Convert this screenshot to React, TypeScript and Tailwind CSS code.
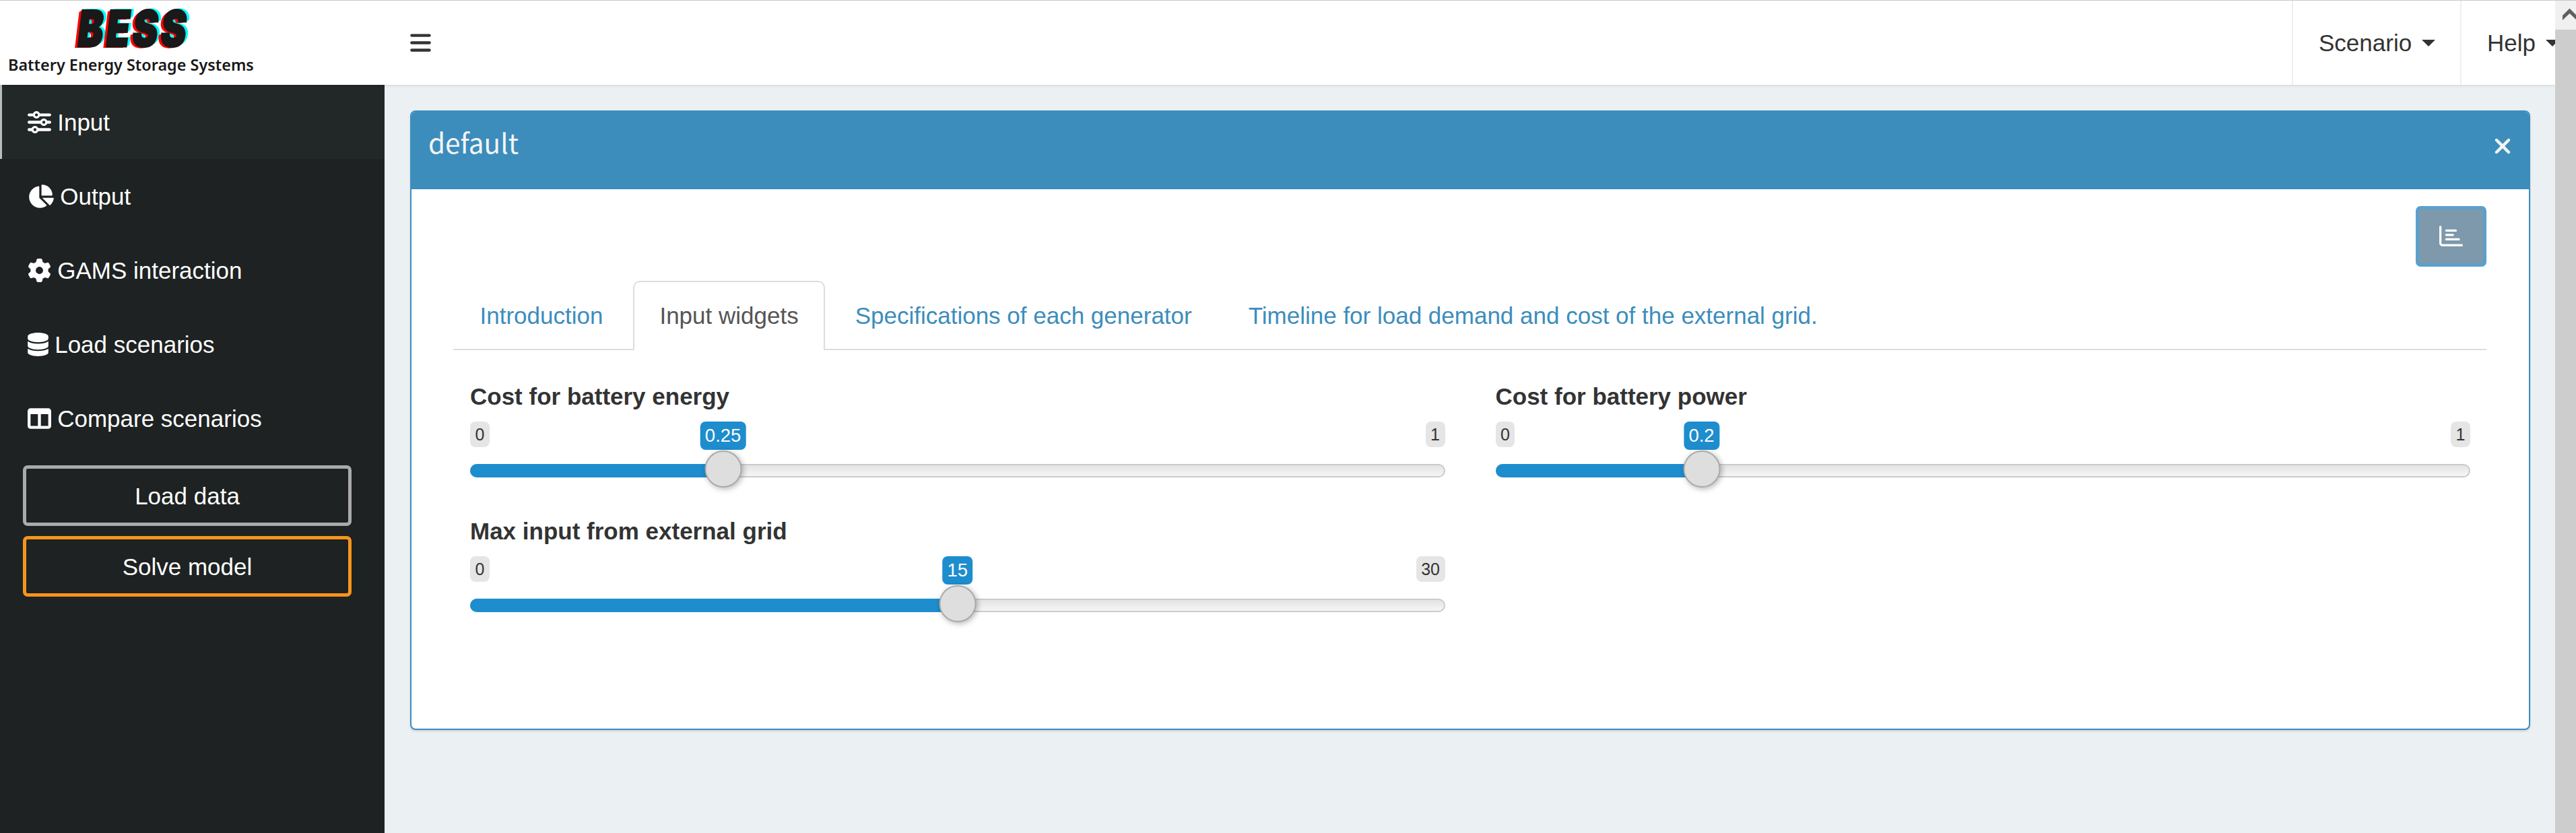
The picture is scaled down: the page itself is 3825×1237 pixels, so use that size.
import { FaSliders, FaChartPie, FaGear, FaDatabase, FaTableColumns, FaBars, FaXmark, FaRegChartBar } from "react-icons/fa6";
import type { IconType } from "react-icons";

type NavItem = { label: string; Icon: IconType; iconClass: string; active?: boolean };

const navItems: NavItem[] = [
  { label: "Input", Icon: FaSliders, iconClass: "w-[35px]", active: true },
  { label: "Output", Icon: FaChartPie, iconClass: "w-[39px]" },
  { label: "GAMS interaction", Icon: FaGear, iconClass: "w-[35px]" },
  { label: "Load scenarios", Icon: FaDatabase, iconClass: "w-[31px]" },
  { label: "Compare scenarios", Icon: FaTableColumns, iconClass: "w-[35px]" },
];

const tabs = [
  "Introduction",
  "Input widgets",
  "Specifications of each generator",
  "Timeline for load demand and cost of the external grid.",
];

function Caret() {
  return (
    <svg className="ml-[15px] h-[10px] w-[20px] shrink-0" viewBox="0 0 20 10">
      <path d="M0 0H20L10 10Z" fill="#333" />
    </svg>
  );
}

function Logo() {
  return (
    <div className="flex h-full w-[571px] shrink-0 flex-col pl-[12px]">
      <div className="ml-[101px] mt-[11px] h-[60px] w-[170px]">
        <span className="block w-max origin-bottom-left scale-x-[0.76] -skew-x-[9deg] whitespace-nowrap font-['Inter'] text-[74px] font-black leading-[60px] tracking-[6px] text-[#191919] [-webkit-text-stroke:3px_#191919] [text-shadow:-6px_2px_0_#ff0000,-4px_1px_0_#ff0000,6px_-2px_0_#00ffff,4px_-1px_0_#00ffff]">
          BESS
        </span>
      </div>
      <span className="mt-[8px] whitespace-nowrap font-['Noto_Sans'] text-[23.4px] font-semibold leading-[32px] text-[#191919]">
        Battery Energy Storage Systems
      </span>
    </div>
  );
}

function Slider({ label, min, max, value }: { label: string; min: number; max: number; value: number }) {
  const center = `calc(27.5px + (100% - 55px) * ${(value - min) / (max - min)})`;
  return (
    <div className="h-[200px]">
      <div className="h-[62px] text-[35px] font-bold leading-[50px]">{label}</div>
      <div className="relative h-[100px]">
        <div className="flex justify-between text-[25px] leading-[38px]">
          <span className="rounded-[8px] bg-[#e5e5e5] px-[7.5px]">{min}</span>
          <span className="rounded-[8px] bg-[#e5e5e5] px-[7.5px]">{max}</span>
        </div>
        <div className="mt-[25px] h-[20px] overflow-hidden rounded-[10px] border-2 border-[#cbcbcb] bg-linear-to-b from-[#e3e3e3] to-[#f6f6f6]" />
        <div className="absolute left-0 top-[63px] h-[20px] rounded-l-[10px] bg-[#1e8dce]" style={{ width: center }} />
        <span
          className="absolute top-0 -translate-x-1/2 rounded-[8px] bg-[#1e8dce] px-[7.5px] text-[27.5px] leading-[42px] text-white"
          style={{ left: center }}
        >
          {value}
        </span>
        <div
          className="absolute top-[43px] size-[55px] -translate-x-1/2 rounded-full border-2 border-[#ababab] bg-[#dedede] shadow-[2px_2px_8px_rgba(0,0,0,0.3)]"
          style={{ left: center }}
        />
      </div>
    </div>
  );
}

export default function App() {
  return (
    <div className="flex h-[1237px] w-[3825px] overflow-hidden border-t border-[#c8c8c8] bg-[#ebf0f3] font-['Liberation_Sans',sans-serif] text-[35px] leading-[50px] text-[#333]">
      <div className="flex w-[3794px] shrink-0 flex-col overflow-hidden">
        <header className="z-10 flex h-[125px] shrink-0 bg-white shadow-[0_1px_4px_rgba(0,0,0,0.12)]">
          <Logo />
          <div className="flex flex-1 items-center pl-[38px]">
            <FaBars className="h-[35px] w-[31px]" />
          </div>
          <div className="flex w-[250px] shrink-0 items-center border-l-2 border-[#eee] pl-[38px]">
            Scenario
            <Caret />
          </div>
          <div className="flex w-[141px] shrink-0 items-center overflow-hidden border-l-2 border-[#eee] pl-[38px]">
            Help
            <Caret />
          </div>
        </header>
        <div className="flex min-h-0 flex-1">
          <aside className="w-[571px] shrink-0 bg-[#1e2222] text-white">
            {navItems.map(({ label, Icon, iconClass, active }) => (
              <div
                key={label}
                className={
                  active
                    ? "flex h-[110px] items-center gap-[9.7px] border-l-[3px] border-[#b5bfbf] bg-[#222727] pl-[37.500px]"
                    : "flex h-[110px] items-center gap-[9.7px] pl-[40.500px]"
                }
              >
                <Icon className={`h-[35px] shrink-0 ${iconClass}`} />
                <span className="pt-[2px]">{label}</span>
              </div>
            ))}
            <div className="ml-[34px] mt-[15px] flex w-[488px] flex-col gap-[15px] text-center">
              <button className="h-[90px] rounded-[7px] border-[5px] border-[#aaaaaa] pt-[2px]">Load data</button>
              <button className="h-[90px] rounded-[7px] border-[5px] border-[#f7941d] pt-[2px]">Solve model</button>
            </div>
          </aside>
          <main className="flex-1 pl-[38px] pr-[37px] pt-[38px]">
            <section className="h-[920px] overflow-hidden rounded-[8px] border-2 border-[#3c8dbc] bg-white shadow-[0_2px_3px_rgba(0,0,0,0.12)]">
              <div className="flex h-[115px] justify-between bg-[#3c8dbc] pl-[25px] pr-[21px] text-[#f4f4f4]">
                <h3 className="mt-[20px] font-['Noto_Sans_CJK_SC',sans-serif] text-[40.5px] leading-[50px]">default</h3>
                <FaXmark className="mt-[33px] h-[36px] w-[36px]" />
              </div>
              <div className="pl-[62px] pr-[63px] pt-[25px]">
                <div className="flex justify-end">
                  <button className="flex h-[90px] w-[105px] items-center justify-center rounded-[7px] border-[5px] border-[#5ba0cc] bg-[#7d99ab] text-white">
                    <FaRegChartBar className="mb-[2px] size-[35px]" />
                  </button>
                </div>
                <nav className="mt-[21px] flex h-[103px] gap-[5px] border-b-2 border-[#ddd]">
                  {tabs.map((tab, i) => (
                    <div
                      key={tab}
                      className={
                        i === 1
                          ? "h-[103px] rounded-t-[10px] border-2 border-b-0 border-[#ddd] bg-white px-[37.500px] pt-[25px] text-[#555]"
                          : "h-[101px] border-2 border-transparent px-[37.500px] pt-[25px] text-[#3c8dbc]"
                      }
                    >
                      {tab}
                    </div>
                  ))}
                </nav>
                <div className="mt-[44px] grid grid-cols-2 gap-x-[75px] pl-[25px] pr-[24px]">
                  <Slider label="Cost for battery energy" min={0} max={1} value={0.25} />
                  <Slider label="Cost for battery power" min={0} max={1} value={0.2} />
                  <Slider label="Max input from external grid" min={0} max={30} value={15} />
                </div>
              </div>
            </section>
          </main>
        </div>
      </div>
      <div className="w-[31px] shrink-0 overflow-hidden bg-[#cdcdcd]">
        <div className="h-[43px] bg-[#f0f0f0]">
          <svg className="h-[43px] w-[31px]" viewBox="0 0 31 43">
            <path d="M11 22L21.500 11.500L32 22V29L21.500 19L11 29Z" fill="#606060" />
          </svg>
        </div>
      </div>
    </div>
  );
}
